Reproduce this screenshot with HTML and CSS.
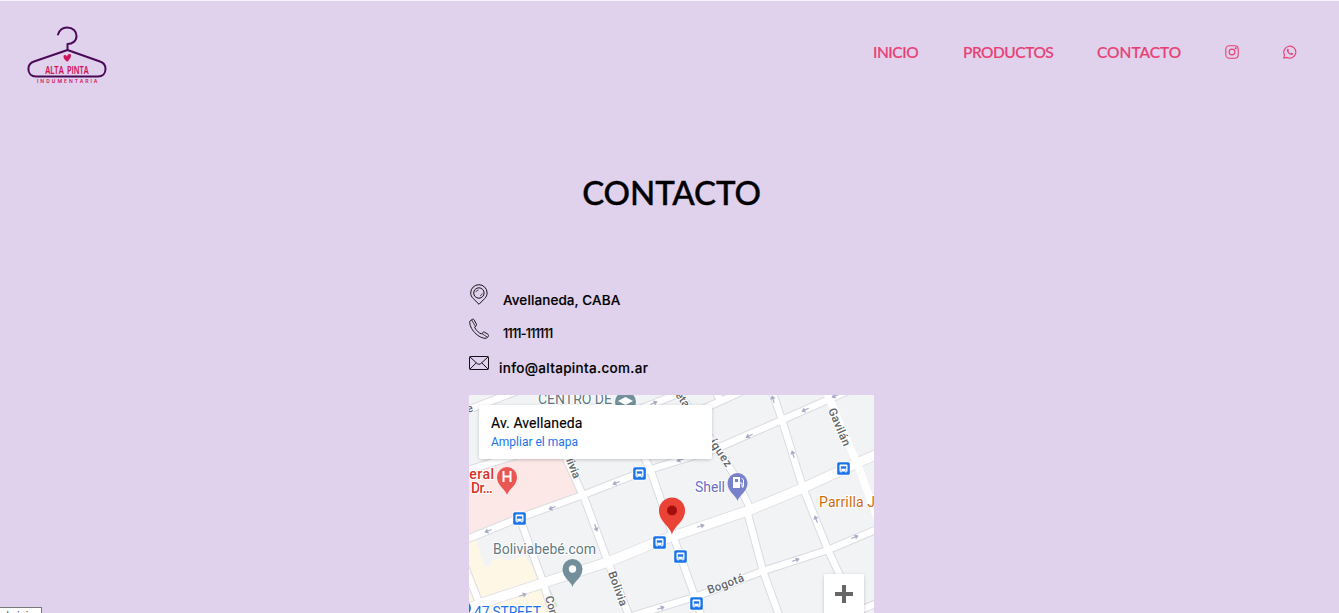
FILE: index.html
```html
<!DOCTYPE html>
<html lang="es">
<head>
<meta charset="utf-8">
<title>Alta Pinta - Contacto</title>
<link rel="stylesheet" href="styles.css">
</head>
<body>
<header class="header">
  <a class="logo">
    <svg width="84" height="62" viewBox="25 24 84 62">
      <g fill="none" stroke="#4b0a57" stroke-width="2" stroke-linecap="round" stroke-linejoin="round">
        <path d="M58 34.500C59.500 30 62 27.500 67 27.500C73 27.500 76.500 31.500 76.500 36C76.500 41 72.500 44 67.500 44V50"/>
        <path d="M67.500 50L34 61.500C29.500 63 28.400 66 28.400 69C28.400 73.500 31.500 76.500 36 76.500H98C102.500 76.500 105.500 73.500 105.500 69C105.500 65.500 103.500 62.600 100 61.500Z"/>
      </g>
      <path d="M67.500 61.800C63 59 62.500 55.200 65 55C66.200 54.900 66.700 56 66.900 56.800C67.500 54.700 68.500 53.700 69.900 54C72.300 54.700 70.500 58.500 67.500 61.800Z" fill="#d3125c"/>
      <g class="logo-name"><text x="45.200" y="73.700" textLength="18.500" lengthAdjust="spacingAndGlyphs">ALTA</text><text x="67" y="73.700" textLength="21.700" lengthAdjust="spacingAndGlyphs">PINTA</text></g>
      <text class="logo-sub" x="37" y="82.800" textLength="60.500" lengthAdjust="spacing">INDUMENTARIA</text>
    </svg>
  </a>
  <nav class="nav">
    <a class="nav-link inicio">INICIO</a>
    <a class="nav-link productos">PRODUCTOS</a>
    <a class="nav-link contacto">CONTACTO</a>
    <a class="nav-icon"><svg width="14" height="14" viewBox="0 0 14 14" fill="none" stroke="#e83e74" stroke-width="1.100"><rect x=".8" y=".8" width="12.400" height="12.400" rx="3.500"/><circle cx="7" cy="7" r="2.900"/><circle cx="10.700" cy="3.300" r=".45" fill="#e83e74"/></svg></a>
    <a class="nav-icon"><svg width="14" height="14" viewBox="0 0 14 14"><path d="M.9 13.100L1.500 9.900A6 6 0 1 1 4 12.400Z" fill="none" stroke="#e83e74" stroke-width="1.100"/><path d="M4.500 3.800L5.300 3.900L6 5.500L5.400 6.400C6 7.400 6.700 8 7.700 8.500L8.600 7.800L10.200 8.600C10 9.600 9.300 10.100 8.300 9.900C5.900 9.300 4.200 7.500 3.800 5.500C3.700 4.700 4 4.100 4.500 3.800Z" fill="#e83e74"/></svg></a>
  </nav>
</header>
<main class="main">
  <h1 class="title">CONTACTO</h1>
  <section class="contact">
    <ul class="contact-list">
      <li class="contact-row"><svg width="20" height="22" viewBox="0 0 20 22" fill="none" stroke="#161118" stroke-width="1"><path d="M10 20.300L4.200 14.500C2.600 12.900 1.700 11.100 1.700 8.900A8.200 8.200 0 0 1 18.100 8.900C18.100 11.100 17.200 12.900 15.700 14.500Z"/><circle cx="9.900" cy="9" r="5.200"/><path d="M6.800 8.200A3.400 3.400 0 0 1 9.500 5.900M13.200 9.400A3.400 3.400 0 0 1 11 12" stroke-width=".7"/></svg><span class="address">Avellaneda, CABA</span></li>
      <li class="contact-row"><svg width="20" height="22" viewBox="0 0 20 22" fill="none" stroke="#161118" stroke-width="1" stroke-linejoin="round"><path d="M3.100 1.500L.8 3.300C.4 6.800 2.500 11.200 5.600 14.500C9 18 13.500 20.700 17.300 20.300L19.500 18.100C19.900 17.300 19.400 16.600 18.800 16.200L15.600 14.200C14.700 13.700 13.900 14.200 13.500 15L12.500 16C10 15.200 6.700 12 5.600 9.200L7.300 7.600C7.800 7 7.600 6.400 7.300 5.900L5.200 2.100C4.700 1.100 3.800 1 3.100 1.500Z"/><path d="M2.600 1.800L6.400 8.400M12.900 15.500L18.400 19.200" stroke-width=".8"/></svg><span class="phone">1111-111111</span></li>
      <li class="contact-row"><svg width="20" height="22" viewBox="0 0 20 22" fill="none" stroke="#161118" stroke-width="1"><rect x=".5" y="4.500" width="19" height="13" rx=".7"/><path d="M1 5L8.300 11.700Q10 13 11.700 11.700L19 5M1 17L7.300 10.800M19 17L12.700 10.800"/></svg><span class="email">info@altapinta.com.ar</span></li>
    </ul>
    <div class="map">
      <svg class="map-canvas" width="405" height="218" viewBox="469 395 405 218">
        <defs>
          <g id="roads">
            <path d="M465 411L520 390M630 413L680 393M703 409L743 391M715 390L721 402"/>
            <path d="M465 471L530 451"/>
            <path d="M465 540L519 518L583 495L642 472L713 450L782 420L850 390"/>
            <path d="M675 388L713 442L733 473L750 508M747 511L763 571L780 618"/>
            <path d="M560 445L585 500L608 562L630 618M520 519L543 582L554 618M465 567L484 615"/>
            <path d="M636 440L651 471L671 530L695 597L702 618M771 388L782 420L803 488L828 550L842 580"/>
            <path d="M825 388L850 447L857 463L878 520" stroke-width="8"/>
            <path d="M620 620L655 609L695 597L763 571L828 550L880 528M858 611L880 602"/>
          </g>
          <g id="bus"><rect x="-7" y="-7" width="14" height="14" rx="2" fill="#fff"/><rect x="-6.300" y="-6.300" width="12.600" height="12.600" rx="1.600" fill="#1a73e8"/><path d="M-4-3Q-4-4-3-4H3Q4-4 4-3V3H3V4H1.800V3H-1.800V4H-3V3H-4Z" fill="#fff"/><path d="M-2.700-2.200H2.700V.2H-2.700Z" fill="#1a73e8"/><circle cx="-2.300" cy="1.500" r=".6" fill="#1a73e8"/><circle cx="2.300" cy="1.500" r=".6" fill="#1a73e8"/></g>
          <path id="arrow" d="M-4-.6H0V-2.700L4 0L0 2.700V.6H-4Z" fill="#a9acc8"/>
          <path id="pin" d="M0 15C-1.500 9-10 6-10-3A10 10 0 0 1 10-3C10 6 1.500 9 0 15Z"/>
        </defs>
        <rect x="469" y="395" width="405" height="218" fill="#f1f3f4"/>
        <path d="M469 472L520 456L565 455L584 495L469 538Z" fill="#fce8e6"/>
        <path d="M469 540H476L485 567L491 565L490 561L503 557L505 561L525 556L543 582L550 613H469Z" fill="#fef7e6"/>
        <path d="M549 587L558 606L555 608L547 590Z" fill="#ceead6"/>
        <g fill="none" stroke="#dadce2" stroke-width="8.500" stroke-linejoin="round"><use href="#roads"/><path d="M465 610L482 603L543 583L608 562L662 540L750 510L803 488L857 463L880 453" stroke-width="11"/></g>
        <g fill="none" stroke="#fff" stroke-width="6.500" stroke-linejoin="round"><use href="#roads"/><path d="M465 610L482 603L543 583L608 562L662 540L750 510L803 488L857 463L880 453" stroke-width="9.500"/></g>
        <use href="#arrow" transform="translate(488 531) rotate(158)"/><use href="#arrow" transform="translate(552 508) rotate(158)"/><use href="#arrow" transform="translate(616 483) rotate(158)"/><use href="#arrow" transform="translate(749 436) rotate(155)"/><use href="#arrow" transform="translate(805 410) rotate(155)"/><use href="#arrow" transform="translate(835 396) rotate(155)"/><use href="#arrow" transform="translate(680 460) rotate(160)"/><use href="#arrow" transform="translate(654 403) rotate(-22)"/>
        <use href="#arrow" transform="translate(773 399) rotate(-107)"/><use href="#arrow" transform="translate(793 454) rotate(-107)"/><use href="#arrow" transform="translate(816 519) rotate(-112)"/><use href="#arrow" transform="translate(596 528) rotate(70)"/>
        <use href="#arrow" transform="translate(523 595) rotate(-18)"/><use href="#arrow" transform="translate(701 526) rotate(-18)"/><use href="#arrow" transform="translate(796 560) rotate(-20)"/><use href="#arrow" transform="translate(855 537) rotate(-23)"/><use href="#arrow" transform="translate(661 608) rotate(-18)"/>
        <use href="#bus" x="639.500" y="473.500"/><use href="#bus" x="843.500" y="468.500"/><use href="#bus" x="519.500" y="518.500"/><use href="#bus" x="659.500" y="542.500"/><use href="#bus" x="680.500" y="556.500"/><use href="#bus" x="696.500" y="603.500"/>
        <g class="street">
          <text transform="translate(563.500 454) rotate(68)">olivia</text>
          <text transform="translate(608 573) rotate(70)" textLength="36">Bolivia</text>
          <text transform="translate(545 597) rotate(75)">Con</text>
          <text transform="translate(828 410) rotate(67)" textLength="40">Gavilán</text>
          <text transform="translate(709 594) rotate(-20)" textLength="38">Bogotá</text>
          <text transform="translate(709 442) rotate(56)" textLength="31">íguez</text>
          <text transform="translate(675 395) rotate(55)">eta</text>
          <text transform="translate(468 413) rotate(-20)">e</text>
        </g>
        <g class="place">
          <text x="538" y="404" fill="#5f7883" textLength="74">CENTRO DE</text>
          <text x="493" y="554" fill="#5f7883" textLength="103">Boliviabebé.com</text>
          <text x="695" y="492" fill="#6870c4" textLength="30">Shell</text>
          <text x="819" y="507" fill="#cb6b0e" textLength="56">Parrilla J</text>
          <text class="hospital" x="461" y="479" textLength="33">neral</text>
          <text class="hospital" x="471" y="493" textLength="22">Dr...</text>
          <text x="474" y="617" fill="#1a73e8" textLength="67">47 STREET</text>
        </g>
        <circle cx="464" cy="608" r="7" fill="#1a73e8"/>
        <circle cx="625.500" cy="402" r="10.500" fill="#738f9b"/><path d="M618 401L625.500 397L633 401L625.500 405ZM621 405V408L625.500 410L630 408V405L625.500 407Z" fill="#fff"/>
        <use href="#pin" x="507" y="480" fill="#ea5752"/><path d="M503.500 471V482M510.500 471V482M503.500 476.500H510.500" stroke="#fff" stroke-width="2" fill="none"/>
        <use href="#pin" x="737.500" y="486" fill="#7882ca"/><path d="M733 477H740V488H733Z" fill="#fff"/><path d="M735 479H738V482H735Z" fill="#7882ca"/><path d="M740 483H742V487Q743.500 488 743.500 486V480L741.500 478" fill="none" stroke="#fff"/>
        <use href="#pin" x="572.500" y="572" fill="#738f9b"/><circle cx="572.500" cy="569" r="3.700" fill="#fff"/>
        <path d="M672 535C670.500 526 659 522 659 510.500A13 13 0 0 1 685 510.500C685 522 673.500 526 672 535Z" fill="#ea4335"/><circle cx="672" cy="510.500" r="5" fill="#a50e0e"/>
      </svg>
      <div class="place-card"><div class="place-title">Av. Avellaneda</div><a class="place-link">Ampliar el mapa</a></div>
      <button class="zoom-in" aria-label="Acercar"><svg width="18" height="18" viewBox="0 0 18 18"><path d="M7 0H11V7H18V11H11V18H7V11H0V7H7Z" fill="#666"/></svg></button>
    </div>
  </section>
</main>
<div class="status">Inicio</div>
</body>
</html>
```
FILE: styles.css
```css
* { box-sizing: border-box; }
body { margin: 0; height: 613px; overflow: hidden; background: #e0d2ec; border-top: 1px solid #f8f4fb; font-family: Lato, "Liberation Sans", sans-serif; }
svg { display: block; flex: none; }
.header { display: flex; justify-content: space-between; align-items: flex-start; padding: 23px 42px 0 25px; height: 105px; }
.logo-name { font: 600 10px "Open Sans", sans-serif; fill: #d3125c; stroke: #d3125c; stroke-width: .2px; }
.logo-sub { font: 600 5px Inter, sans-serif; fill: #d3125c; }
.nav { display: flex; align-items: center; padding-top: 16px; height: 39px; }
.nav-link { color: #e83e74; font-size: 15.5px; font-weight: 500; line-height: 24px; white-space: nowrap; -webkit-text-stroke: .2px #e83e74; }
.inicio { width: 90px; letter-spacing: -.45px; }
.productos { width: 134px; letter-spacing: -.48px; }
.contacto { width: 128px; letter-spacing: 0; }
.nav-icon { width: 58px; }
.nav-icon:last-child { width: 14px; }
.main { display: flex; flex-direction: column; align-items: center; }
.title { margin: 62px 0 0 4px; font-size: 33px; line-height: 48px; font-weight: 500; letter-spacing: -.1px; color: #000; -webkit-text-stroke: .4px #000; }
.contact { width: 405px; margin: 68px 0 0 4px; }
.contact-list { list-style: none; margin: 0; padding: 0; height: 111px; }
.contact-row { display: flex; align-items: flex-start; height: 34px; font: 500 13.5px/18px Inter, sans-serif; color: #000; white-space: nowrap; }
.contact-row span { padding-top: 7px; margin-left: 14px; -webkit-text-stroke: .15px #000; }
.address { letter-spacing: .1px; }
.phone { font-size: 12.5px; letter-spacing: -.75px; }
.contact-row .email { margin-left: 10px; letter-spacing: .32px; }
.map { position: relative; width: 405px; height: 218px; overflow: hidden; font-family: Roboto, sans-serif; }
.street { font: 500 11.5px Roboto, sans-serif; fill: #62666b; stroke: #fff; stroke-width: 2px; paint-order: stroke; }
.place { font: 400 14px Roboto, sans-serif; stroke: #fff; stroke-width: 2px; paint-order: stroke; }
.hospital { font-weight: 500; fill: #d93025; }
.place-card { position: absolute; left: 10px; top: 10px; width: 233px; height: 54px; padding: 9px 12px; background: #fff; border-radius: 2px; box-shadow: 0 1px 4px -1px rgba(0,0,0,.3); }
.place-title { font-size: 14px; line-height: 18px; font-weight: 400; letter-spacing: .1px; color: #000; -webkit-text-stroke: .15px #000; }
.place-link { display: block; font-size: 12px; line-height: 20px; color: #1a73e8; }
.zoom-in { position: absolute; display: flex; align-items: flex-start; right: 10px; top: 179px; width: 40px; height: 50px; padding: 11px; border: 0; border-radius: 2px; background: #fff; box-shadow: 0 1px 4px -1px rgba(0,0,0,.3); }
.status { position: absolute; left: -1px; top: 607px; width: 43px; height: 20px; padding: 0 6px; border: 1px solid #777; background: #fff; font: 12px/16px "Open Sans", sans-serif; color: #555; }
```
